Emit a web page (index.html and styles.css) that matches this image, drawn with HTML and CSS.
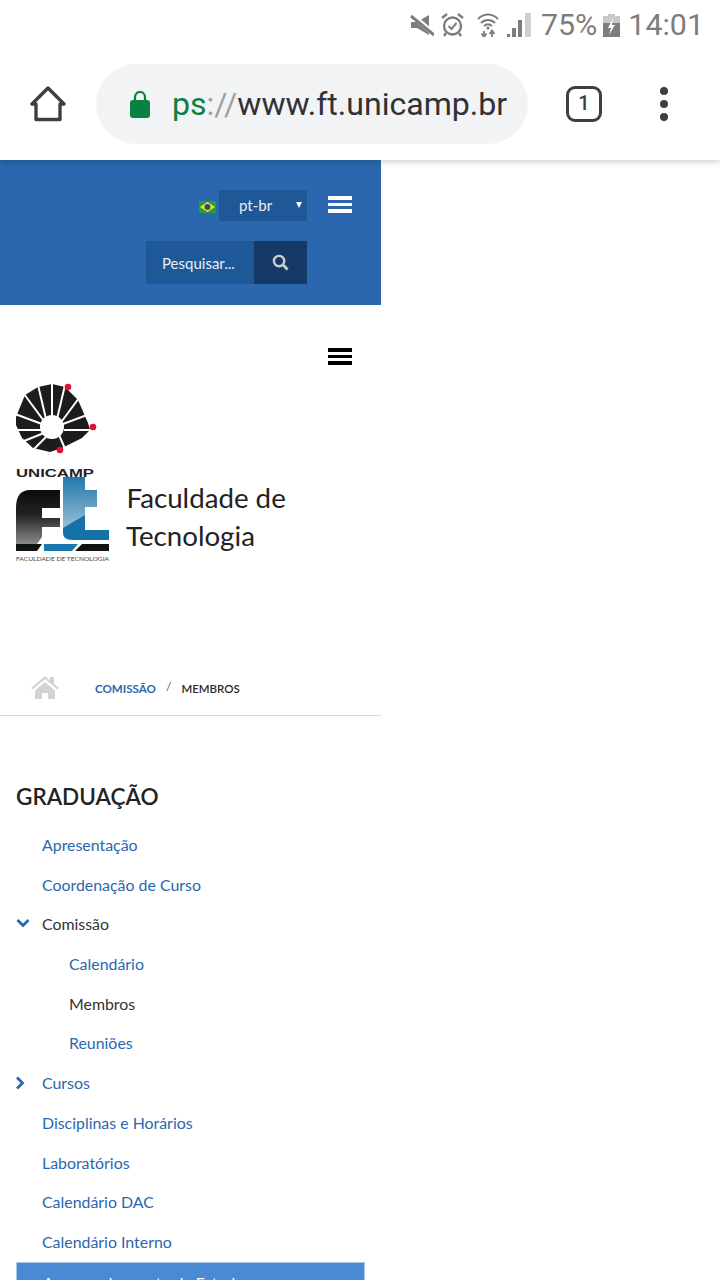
FILE: index.html
```html
<!DOCTYPE html>
<html>

<head>
    <title>Membros - Faculdade de Tecnologia</title>
    <link rel="stylesheet" href="styles.css">
</head>

<body>
    <!-- phone status bar -->
    <div class="status">
        <svg class="ic-mute" viewBox="0 0 24 22"><path d="M1 8h6l12-7v20l-12-7H1z" fill="#7d7d7d"/><path d="M1 0l23 20" stroke="#fff" stroke-width="5"/><path d="M1 2l23 19" stroke="#7d7d7d" stroke-width="3"/></svg>
        <svg class="ic-alarm" viewBox="0 0 23 24"><circle cx="11.500" cy="13" r="8.500" fill="none" stroke="#7d7d7d" stroke-width="2.400"/><path d="M7.500 13l3 3 5-6" fill="none" stroke="#7d7d7d" stroke-width="2"/><path d="M1 5l5-4M22 5l-5-4M5 20l-2 3M18 20l2 3" stroke="#7d7d7d" stroke-width="2.400"/></svg>
        <svg class="ic-wifi" viewBox="0 0 22 24"><path d="M1 6c6-6 14-6 20 0M4 10c4-4 10-4 14 0M7 13c2.500-2 5.500-2 8 0" fill="none" stroke="#7d7d7d" stroke-width="2.200"/><circle cx="11" cy="15" r="1.600" fill="#7d7d7d"/><path d="M7 18v6M4.500 20.500L7 24l2.500-3.500M15 24v-6M12.500 21l2.500-3.500 2.500 3.500" fill="none" stroke="#7d7d7d" stroke-width="1.800"/></svg>
        <svg class="ic-signal" viewBox="0 0 24 24"><path d="M0 24h3v-3H0zM5 24h4v-9H5zM11 24h4V7h-4z" fill="#7d7d7d"/><path d="M18 24h6V0h-6z" fill="#cfcfcf"/></svg>
        <span class="pct">75%</span>
        <svg class="ic-batt" viewBox="0 0 17 23"><path d="M5 0h7v2h5v21H0V2h5z" fill="#c9c9c9"/><path d="M0 9h17v14H0z" fill="#7d7d7d"/><path d="M10 4l-5 10h3l-2 7 6-10H9z" fill="#fff"/></svg>
        <span class="clock">14:01</span>
    </div>

    <!-- browser toolbar -->
    <div class="toolbar">
        <svg class="ic-home" viewBox="0 0 36 36"><path d="M18 2L2 18h4v15.500h24V18h4z" fill="none" stroke="#3c4043" stroke-width="3.400" stroke-linejoin="round"/></svg>
        <div class="omnibox">
            <svg class="ic-lock" viewBox="0 0 20 27"><path d="M5 10V6a5 5 0 0 1 10 0v4" fill="none" stroke="#0b8043" stroke-width="2.200"/><rect y="9" width="20" height="18" rx="3" fill="#0b8043"/></svg>
            <span class="url"><span class="url-g">ps</span><span class="url-s">://</span>www.ft.unicamp.br</span>
        </div>
        <div class="tabs">1</div>
        <div class="dots"><i></i><i></i><i></i></div>
    </div>

    <div class="page">
        <div class="topbar">
            <div class="lang-row">
                <svg class="flag" viewBox="0 0 17 12"><rect width="17" height="12" fill="#229e45"/><path d="M8.500 1L16 6l-7.500 5L1 6z" fill="#f8e509"/><circle cx="8.500" cy="6" r="3" fill="#2b49a3"/></svg>
                <div class="lang">pt-br<span class="caret"></span></div>
                <div class="burger"><i></i><i></i><i></i></div>
            </div>
            <div class="search">
                <div class="search-input">Pesquisar...</div>
                <div class="search-btn">
                    <svg viewBox="0 0 18 18" width="17" height="17"><circle cx="7.500" cy="7.500" r="5.500" fill="none" stroke="#c9ced4" stroke-width="2.600"/><path d="M11.500 11.500l5 5" stroke="#c9ced4" stroke-width="3"/></svg>
                </div>
            </div>
        </div>

        <div class="nav-row">
            <div class="burger burger-dark"><i></i><i></i><i></i></div>
        </div>

        <!-- logos -->
        <svg class="logo" viewBox="0 0 280 180" width="280" height="180">
            <path d="M0 32L9 10 22 2 36-1 49 2 62 15 72 38 74 45 66 53 46 63 34 67 17 63 6 53 0 40z" fill="#1c1c1c"/>
            <g stroke="#fff" stroke-width="2">
                <path d="M36-2V34M22 0L30 34M8 9L28 36M-1 29L26 39M-1 45H28M8 56L28 48M17 65L30 52M43 50L50 66M49 0L41 34M63 13L46 36M71 30L47 39M75 45H48"/>
            </g>
            <circle cx="36" cy="42" r="12" fill="#fff"/>
            <circle cx="52" cy="2" r="3.300" fill="#e8102a"/>
            <circle cx="77" cy="42" r="3.300" fill="#e8102a"/>
            <circle cx="44" cy="65" r="3.300" fill="#e8102a"/>
            <text class="logo-uni" x="0" y="92" textLength="78" lengthAdjust="spacingAndGlyphs">UNICAMP</text>

            <defs>
                <linearGradient id="gf" x1="0" y1="0" x2="0" y2="1"><stop offset="0" stop-color="#0c0c0c"/><stop offset="0.45" stop-color="#222"/><stop offset="1" stop-color="#8a8a8a"/></linearGradient>
                <linearGradient id="gt" x1="0" y1="0" x2="0" y2="1"><stop offset="0" stop-color="#2378ab"/><stop offset="1" stop-color="#a2c6da"/></linearGradient>
            </defs>
            <path d="M0 159V123Q0 105 14 105H44V123H26V133H44V142H26V152L21 159z" fill="url(#gf)"/>
            <path d="M0 159H21L26 159 21 166H0z" fill="#111"/>
            <path d="M47 92H69V105H81V122H69V145L47 148z" fill="url(#gt)"/>
            <path d="M47 143L69 130V145H93V155H56Q47 155 47 148z" fill="#1472a8"/>
            <path d="M28 159H62L56 166H28z" fill="#1a78b0"/>
            <path d="M66 159H93V166H59z" fill="#111"/>
            <text class="logo-ftsmall" x="0" y="176" textLength="93" lengthAdjust="spacingAndGlyphs">FACULDADE DE TECNOLOGIA</text>
            <text class="logo-name" x="110.500" y="123">Faculdade de</text>
            <text class="logo-name" x="110" y="161">Tecnologia</text>
        </svg>

        <div class="crumbs">
            <svg class="ic-crumb" viewBox="0 0 28 23"><path d="M14 0L0 12l1.500 1.500L14 3l12.500 10.500L28 12l-5-4.300V1h-4v3.400z" fill="#d2d3d5"/><path d="M4 14.500L14 6l10 8.500V23h-7v-6h-6v6H4z" fill="#d2d3d5"/></svg>
            <a class="crumb-link">COMISSÃO</a>
            <span class="crumb-sep">/</span>
            <span class="crumb-cur">MEMBROS</span>
        </div>

        <h2 class="side-title">GRADUAÇÃO</h2>

        <ul class="menu">
            <li><a>Apresentação</a></li>
            <li><a>Coordenação de Curso</a></li>
            <li class="cur"><svg class="chev" viewBox="0 0 14 10"><path d="M1.500 2l5.500 5.500L12.500 2" fill="none" stroke="#2a67ae" stroke-width="2.800"/></svg>Comissão</li>
            <li class="sub"><a>Calendário</a></li>
            <li class="sub cur">Membros</li>
            <li class="sub"><a>Reuniões</a></li>
            <li><svg class="chev chev-r" viewBox="0 0 10 14"><path d="M2 1.500L7.500 7 2 12.500" fill="none" stroke="#2a67ae" stroke-width="2.800"/></svg><a>Cursos</a></li>
            <li><a>Disciplinas e Horários</a></li>
            <li><a>Laboratórios</a></li>
            <li><a>Calendário DAC</a></li>
            <li><a>Calendário Interno</a></li>
            <li class="active">Acompanhamento de Estudos</li>
        </ul>
    </div>
</body>

</html>
```

FILE: styles.css
```css
html, body {
    margin: 0;
    padding: 0;
    height: 1280px;
    overflow: hidden;
    background: #fff;
}

body {
    font-family: Lato, sans-serif;
}

/* status bar */
.status {
    height: 50px;
    display: flex;
    align-items: center;
    justify-content: flex-end;
    padding-right: 16px;
    color: #7d7d7d;
    font: 30.400px/1 Roboto, sans-serif;
    position: relative;
    z-index: 3;
    background: #fff;
}

.status svg { display: block; flex: none; }
.ic-mute { width: 24px; height: 22px; margin-right: 7px; }
.ic-alarm { width: 23px; height: 24px; margin-right: 13px; }
.ic-wifi { width: 22px; height: 24px; margin-right: 8px; }
.ic-signal { width: 24px; height: 24px; margin-right: 10px; }
.ic-batt { width: 17px; height: 23px; margin: 0 8px 0 6px; }

/* toolbar */
.toolbar {
    height: 110px;
    display: flex;
    align-items: center;
    padding: 0 0 2px 30px;
    box-shadow: 0 2px 6px rgba(0,0,0,0.18);
    position: relative;
    z-index: 2;
    background: #fff;
    box-sizing: border-box;
}

.ic-home { width: 36px; height: 36px; flex: none; }

.omnibox {
    margin-left: 30px;
    width: 432px;
    height: 80px;
    border-radius: 40px;
    background: #f1f3f4;
    display: flex;
    align-items: center;
    padding-left: 34px;
    box-sizing: border-box;
    flex: none;
}

.ic-lock { width: 20px; height: 27px; flex: none; }

.url {
    margin-left: 22px;
    font: 32.100px/1 Roboto, sans-serif;
    color: #303134;
    white-space: nowrap;
}

.url-g { color: #0b8043; }
.url-s { color: #9aa0a6; }

.tabs {
    margin-left: 38px;
    width: 36px;
    height: 36px;
    box-sizing: border-box;
    border: 3.500px solid #3c4043;
    border-radius: 9px;
    font: 500 20px/29px Roboto, sans-serif;
    color: #3c4043;
    text-align: center;
    flex: none;
}

.dots {
    margin-left: 58px;
    display: flex;
    flex-direction: column;
    gap: 5px;
}

.dots i {
    display: block;
    width: 8px;
    height: 8px;
    border-radius: 50%;
    background: #3c4043;
}

/* page */
.page {
    width: 381px;
}

.topbar {
    background: #2a67ae;
    height: 145px;
    box-sizing: border-box;
    padding: 30px 0 0;
}

.lang-row {
    display: flex;
    align-items: flex-start;
    height: 51px;
}

.flag {
    width: 17px;
    height: 12px;
    margin: 11px 3px 0 199px;
    flex: none;
}

.lang {
    width: 88px;
    height: 31px;
    background: #1f5896;
    color: #e6edf5;
    font-size: 15px;
    line-height: 31px;
    padding-left: 20px;
    box-sizing: border-box;
    position: relative;
}

.caret {
    position: absolute;
    right: 5px;
    top: 12px;
    border-left: 3px solid transparent;
    border-right: 3px solid transparent;
    border-top: 6px solid #fff;
}

.burger {
    margin: 6px 0 0 21px;
    width: 24px;
}

.burger i {
    display: block;
    height: 3.500px;
    background: #fff;
    margin-bottom: 3px;
}

.burger-dark i { background: #000; }

.search {
    display: flex;
    margin-left: 146px;
    width: 161px;
    height: 43px;
}

.search-input {
    width: 108px;
    background: #1f5896;
    color: #e6edf5;
    font-size: 15px;
    line-height: 45px;
    padding-left: 16px;
    box-sizing: border-box;
}

.search-btn {
    width: 53px;
    background: #163a66;
    display: flex;
    align-items: center;
    justify-content: center;
}

.nav-row {
    height: 80px;
    box-sizing: border-box;
    padding: 43px 0 0 307px;
}

.nav-row .burger { margin: 0 0 0 21px; }

.logo {
    display: block;
    margin-left: 16px;
    overflow: visible;
}

.logo-uni {
    font: bold 11.500px "Liberation Sans", sans-serif;
    fill: #222;
}

.logo-ftsmall {
    font: 6.500px Lato, sans-serif;
    fill: #444;
}

.logo-name {
    font: 27.700px Lato, sans-serif;
    fill: #222;
}

.crumbs {
    margin-top: 111px;
    height: 39px;
    border-bottom: 1px solid #d9d9d9;
    display: flex;
    align-items: flex-start;
    padding-left: 31px;
}

.ic-crumb { width: 28px; height: 23px; flex: none; }

.crumb-link {
    margin: 6px 0 0 36px;
    font-size: 11.600px;
    font-weight: bold;
    color: #2a67ae;
}

.crumb-sep {
    margin: 3px 0 0 10px;
    font-size: 12px;
    color: #555;
}

.crumb-cur {
    margin: 6px 0 0 10px;
    font-size: 11.500px;
    font-weight: 600;
    color: #2b2b2b;
}

.side-title {
    margin: 66px 0 0 16px;
    font-size: 22.500px;
    font-weight: 600;
    line-height: 30px;
    color: #222;
}

.menu {
    list-style: none;
    margin: 13px 0 0;
    padding: 0;
}

.menu li {
    height: 39.700px;
    line-height: 39.700px;
    padding-left: 42px;
    font-size: 15.900px;
    color: #333;
    position: relative;
    white-space: nowrap;
}

.menu a { color: #2a67ae; }
.menu li.sub { padding-left: 69px; }

.chev {
    position: absolute;
    left: 16px;
    top: 14px;
    width: 14px;
    height: 10px;
}

.chev-r {
    left: 15px;
    top: 13px;
    width: 10px;
    height: 14px;
}

.menu li.active {
    margin: 0 16px;
    padding-left: 26px;
    background: #488bd4;
    border: 1px solid #a9c8ea;
    box-sizing: border-box;
    color: #fff;
    height: 60px;
}
```
